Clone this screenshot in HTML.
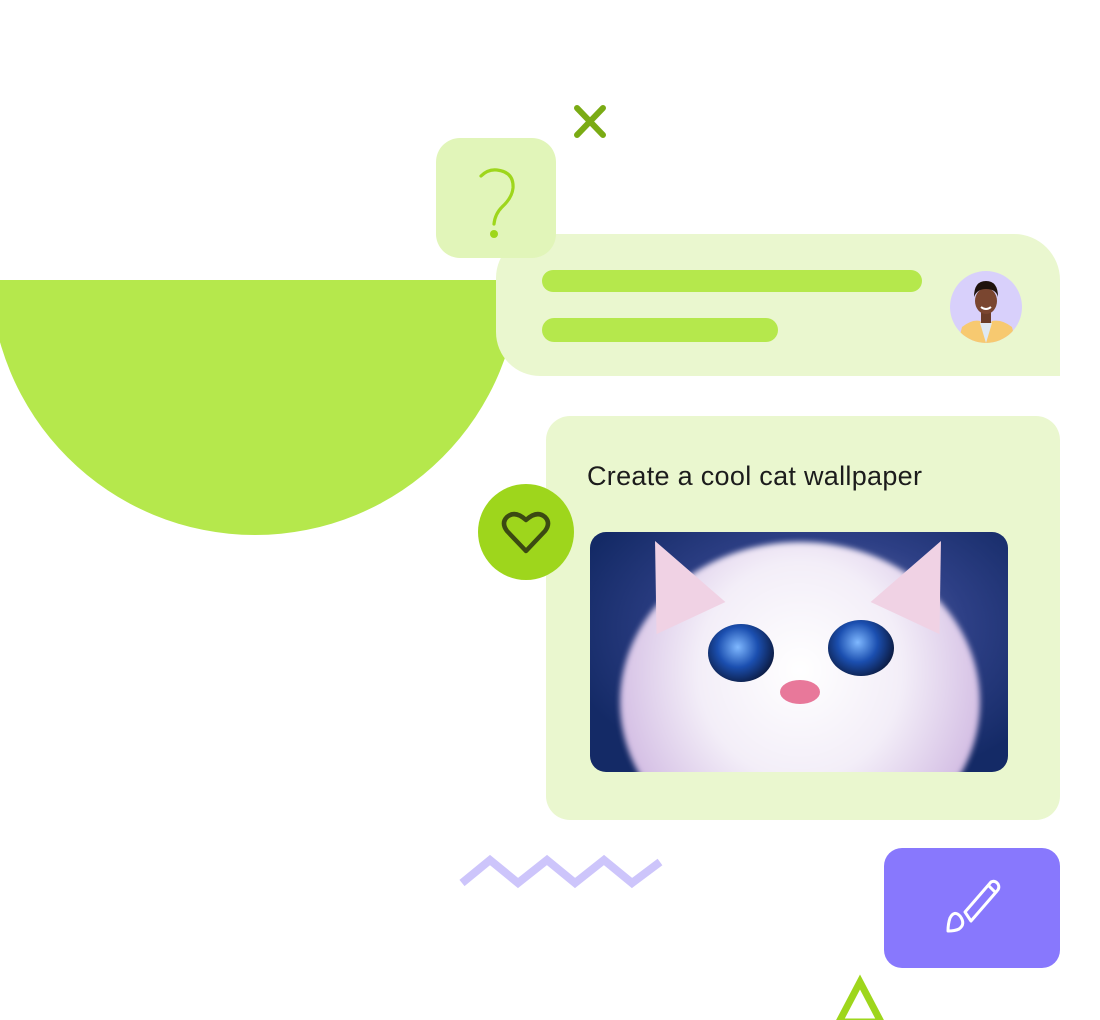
<!DOCTYPE html>
<html><head><meta charset="utf-8"><style>
*{margin:0;padding:0;box-sizing:border-box}
body{width:1100px;height:1016px;overflow:hidden;background:#fff;position:relative;font-family:"Liberation Sans",sans-serif}
.a{position:absolute}
</style></head><body>
<div class="a" style="left:0;top:280px;width:540px;height:256px;overflow:hidden">
 <div class="a" style="left:-10px;top:-275px;width:530px;height:530px;border-radius:50%;background:#b5e84c"></div>
</div>
<div class="a" style="left:496px;top:234px;width:564px;height:142px;background:#eaf7cf;border-radius:44px 46px 0 44px"></div>
<div class="a" style="left:542px;top:270px;width:380px;height:22px;border-radius:11px;background:#b5e84c"></div>
<div class="a" style="left:542px;top:318px;width:236px;height:24px;border-radius:12px;background:#b5e84c"></div>
<svg class="a" style="left:950px;top:271px" width="72" height="72" viewBox="0 0 72 72">
 <defs><clipPath id="c"><circle cx="36" cy="36" r="36"/></clipPath></defs>
 <g clip-path="url(#c)"><rect width="72" height="72" fill="#d8d0fb"/>
 <path d="M8 72 L12 56 Q22 48 30 50 L36 60 L42 50 Q52 48 62 56 L66 72Z" fill="#f7c970"/>
 <path d="M30 52 L36 72 L42 52Z" fill="#dfe9f3"/>
 <rect x="31" y="40" width="10" height="12" fill="#6b3d28"/>
 <ellipse cx="36" cy="30" rx="11" ry="13" fill="#7a4630"/>
 <path d="M24 26 Q24 10 36 10 Q48 10 48 26 Q46 18 36 18 Q27 18 24 26Z" fill="#1e120c"/>
 <path d="M31 36 Q36 40 41 36" stroke="#fff" stroke-width="2" fill="none"/></g>
</svg>
<div class="a" style="left:436px;top:138px;width:120px;height:120px;border-radius:24px;background:#e1f5b9"></div>
<svg class="a" style="left:436px;top:138px" width="120" height="120"><path d="M45 38 Q52 31 61 32 Q78 34 77 50 Q76 60 66 69 Q59 76 58 86" fill="none" stroke="#9ed61c" stroke-width="3.2" stroke-linecap="round"/><circle cx="58" cy="96" r="4" fill="#9ed61c"/></svg>
<svg class="a" style="left:570px;top:102px" width="40" height="40"><path d="M7 6 L33 33 M33 6 L7 33" stroke="#7aab14" stroke-width="6" stroke-linecap="round"/></svg>
<div class="a" style="left:546px;top:416px;width:514px;height:404px;border-radius:24px;background:#eaf7cf"></div>
<div class="a" style="left:587px;top:461px;font-size:27px;letter-spacing:0.3px;color:#1c1c1c">Create a cool cat wallpaper</div>
<div class="a" style="left:590px;top:532px;width:418px;height:240px;border-radius:16px;overflow:hidden;background:radial-gradient(ellipse at 55% 40%,#6b77b0 0%,#2d3f85 45%,#142a66 80%)">
 <div class="a" style="left:30px;top:10px;width:360px;height:320px;border-radius:50%;background:radial-gradient(ellipse at 50% 40%,#fff 0%,#f3eef8 40%,#d7c3e6 70%,#b28bc8 100%);filter:blur(3px)"></div>
 <div class="a" style="left:45px;top:5px;width:0;height:0;border-left:38px solid transparent;border-right:38px solid transparent;border-bottom:85px solid #f0d2e4;transform:rotate(-25deg)"></div>
 <div class="a" style="left:295px;top:5px;width:0;height:0;border-left:38px solid transparent;border-right:38px solid transparent;border-bottom:85px solid #f0d2e4;transform:rotate(25deg)"></div>
 <div class="a" style="left:118px;top:92px;width:66px;height:58px;border-radius:50%;background:radial-gradient(circle at 45% 40%,#7fb8ff 0%,#1b4fb0 40%,#0a1535 80%)"></div>
 <div class="a" style="left:238px;top:88px;width:66px;height:56px;border-radius:50%;background:radial-gradient(circle at 45% 40%,#7fb8ff 0%,#1b4fb0 40%,#0a1535 80%)"></div>
 <div class="a" style="left:190px;top:148px;width:40px;height:24px;border-radius:50%;background:#e8789a"></div>
</div>
<div class="a" style="left:478px;top:484px;width:96px;height:96px;border-radius:50%;background:#9ed61c"></div>
<svg class="a" style="left:498px;top:504px" width="56" height="56" viewBox="0 0 56 56"><path d="M28 47 L9 27 Q3 19 9 13 Q17 6 28 16 Q39 6 47 13 Q53 19 47 27 Z" fill="none" stroke="#3b4a12" stroke-width="4.5" stroke-linejoin="round"/></svg>
<svg class="a" style="left:455px;top:850px" width="215" height="45"><polyline points="7,33 35,10 63,33 92,10 120,33 149,10 177,33 205,12" fill="none" stroke="#cdc5fb" stroke-width="8"/></svg>
<div class="a" style="left:884px;top:848px;width:176px;height:120px;border-radius:18px;background:#8878fd"></div>
<svg class="a" style="left:940px;top:876px" width="66" height="66" viewBox="0 0 66 66"><g fill="none" stroke="#fff" stroke-width="3" stroke-linejoin="round"><path d="M22 30 L48 0 Q52 -2 55 2 Q57 6 54 9 L28 39 Z" transform="translate(3,6)"/><path d="M49 10 L55 16"/><path d="M20 40 Q14 34 10 42 Q8 48 8 55 Q15 55 19 53 Q26 48 20 40Z"/></g></svg>
<svg class="a" style="left:832px;top:974px" width="58" height="46"><path d="M28 8 L49 48 L7 48 Z" fill="none" stroke="#9ed61c" stroke-width="7"/></svg>
</body></html>
